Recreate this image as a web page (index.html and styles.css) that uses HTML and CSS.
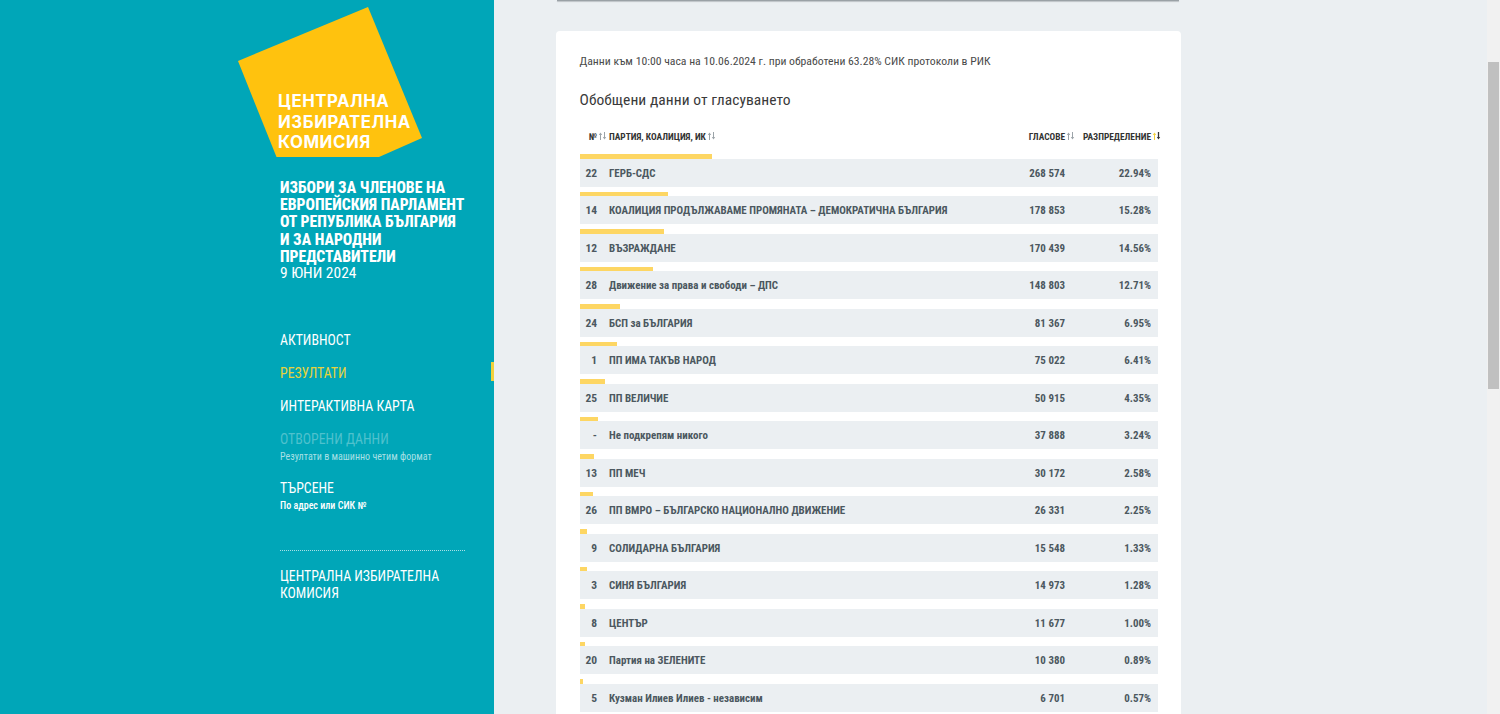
FILE: index.html
```html
<!DOCTYPE html>
<html lang="bg">
<head>
<meta charset="utf-8">
<title>Резултати</title>
<link rel="stylesheet" href="styles.css">
</head>
<body>
<div class="app">
  <aside class="sidebar">
    <div class="logo">
      <svg class="logo-shape" width="184" height="150" viewBox="0 0 184 150"><polygon points="130,0 0,54 38.500,150 141,150 184,131" fill="#ffc20e"/></svg>
      <div class="logo-text">ЦЕНТРАЛНА<br>ИЗБИРАТЕЛНА<br>КОМИСИЯ</div>
    </div>
    <h1 class="election"><b>ИЗБОРИ ЗА ЧЛЕНОВЕ НА ЕВРОПЕЙСКИЯ ПАРЛАМЕНТ ОТ РЕПУБЛИКА БЪЛГАРИЯ И ЗА НАРОДНИ ПРЕДСТАВИТЕЛИ</b>9 ЮНИ 2024</h1>
    <nav class="nav">
      <a class="nav-item">АКТИВНОСТ</a>
      <a class="nav-item active">РЕЗУЛТАТИ</a>
      <a class="nav-item">ИНТЕРАКТИВНА КАРТА</a>
      <a class="nav-item muted">ОТВОРЕНИ ДАННИ<small>Резултати в машинно четим формат</small></a>
      <a class="nav-item">ТЪРСЕНЕ<small class="strong">По адрес или СИК №</small></a>
    </nav>
    <a class="cik">ЦЕНТРАЛНА ИЗБИРАТЕЛНА КОМИСИЯ</a>
  </aside>
  <main class="main">
    <div class="topbar"></div>
    <section class="card">
      <p class="info">Данни към 10:00 часа на 10.06.2024 г. при обработени 63.28% СИК протоколи в РИК</p>
      <h2 class="title">Обобщени данни от гласуването</h2>
      <div class="thead">
        <div class="c-num">№<svg class="sort" viewBox="0 0 9 8"><path d="M2.500 8V2"/><path class="head" d="M.8 3 2.500 .5 4.200 3z"/><path d="M6.500 0v6"/><path class="head" d="M4.800 5 6.500 7.500 8.200 5z"/></svg></div>
        <div class="c-name">ПАРТИЯ, КОАЛИЦИЯ, ИК<svg class="sort" viewBox="0 0 9 8"><path d="M2.500 8V2"/><path class="head" d="M.8 3 2.500 .5 4.200 3z"/><path d="M6.500 0v6"/><path class="head" d="M4.800 5 6.500 7.500 8.200 5z"/></svg></div>
        <div class="c-votes">ГЛАСОВЕ<svg class="sort" viewBox="0 0 9 8"><path d="M2.500 8V2"/><path class="head" d="M.8 3 2.500 .5 4.200 3z"/><path d="M6.500 0v6"/><path class="head" d="M4.800 5 6.500 7.500 8.200 5z"/></svg></div>
        <div class="c-pct">РАЗПРЕДЕЛЕНИЕ<svg class="sort on" viewBox="0 0 9 8"><g class="up"><path d="M2.500 8V2"/><path class="head" d="M.8 3 2.500 .5 4.200 3z"/></g><g class="down"><path d="M6.500 0v6"/><path class="head" d="M4.800 5 6.500 7.500 8.200 5z"/></g></svg></div>
      </div>
      <div class="row"><i class="bar" style="width:22.94%"></i><div class="cells"><div class="c-num">22</div><div class="c-name">ГЕРБ-СДС</div><div class="c-votes">268 574</div><div class="c-pct">22.94%</div></div></div>
      <div class="row"><i class="bar" style="width:15.28%"></i><div class="cells"><div class="c-num">14</div><div class="c-name">КОАЛИЦИЯ ПРОДЪЛЖАВАМЕ ПРОМЯНАТА – ДЕМОКРАТИЧНА БЪЛГАРИЯ</div><div class="c-votes">178 853</div><div class="c-pct">15.28%</div></div></div>
      <div class="row"><i class="bar" style="width:14.56%"></i><div class="cells"><div class="c-num">12</div><div class="c-name">ВЪЗРАЖДАНЕ</div><div class="c-votes">170 439</div><div class="c-pct">14.56%</div></div></div>
      <div class="row"><i class="bar" style="width:12.71%"></i><div class="cells"><div class="c-num">28</div><div class="c-name">Движение за права и свободи – ДПС</div><div class="c-votes">148 803</div><div class="c-pct">12.71%</div></div></div>
      <div class="row"><i class="bar" style="width:6.95%"></i><div class="cells"><div class="c-num">24</div><div class="c-name">БСП за БЪЛГАРИЯ</div><div class="c-votes">81 367</div><div class="c-pct">6.95%</div></div></div>
      <div class="row"><i class="bar" style="width:6.41%"></i><div class="cells"><div class="c-num">1</div><div class="c-name">ПП ИМА ТАКЪВ НАРОД</div><div class="c-votes">75 022</div><div class="c-pct">6.41%</div></div></div>
      <div class="row"><i class="bar" style="width:4.35%"></i><div class="cells"><div class="c-num">25</div><div class="c-name">ПП ВЕЛИЧИЕ</div><div class="c-votes">50 915</div><div class="c-pct">4.35%</div></div></div>
      <div class="row"><i class="bar" style="width:3.24%"></i><div class="cells"><div class="c-num">-</div><div class="c-name">Не подкрепям никого</div><div class="c-votes">37 888</div><div class="c-pct">3.24%</div></div></div>
      <div class="row"><i class="bar" style="width:2.58%"></i><div class="cells"><div class="c-num">13</div><div class="c-name">ПП МЕЧ</div><div class="c-votes">30 172</div><div class="c-pct">2.58%</div></div></div>
      <div class="row"><i class="bar" style="width:2.25%"></i><div class="cells"><div class="c-num">26</div><div class="c-name">ПП ВМРО – БЪЛГАРСКО НАЦИОНАЛНО ДВИЖЕНИЕ</div><div class="c-votes">26 331</div><div class="c-pct">2.25%</div></div></div>
      <div class="row"><i class="bar" style="width:1.33%"></i><div class="cells"><div class="c-num">9</div><div class="c-name">СОЛИДАРНА БЪЛГАРИЯ</div><div class="c-votes">15 548</div><div class="c-pct">1.33%</div></div></div>
      <div class="row"><i class="bar" style="width:1.28%"></i><div class="cells"><div class="c-num">3</div><div class="c-name">СИНЯ БЪЛГАРИЯ</div><div class="c-votes">14 973</div><div class="c-pct">1.28%</div></div></div>
      <div class="row"><i class="bar" style="width:1%"></i><div class="cells"><div class="c-num">8</div><div class="c-name">ЦЕНТЪР</div><div class="c-votes">11 677</div><div class="c-pct">1.00%</div></div></div>
      <div class="row"><i class="bar" style="width:.89%"></i><div class="cells"><div class="c-num">20</div><div class="c-name">Партия на ЗЕЛЕНИТЕ</div><div class="c-votes">10 380</div><div class="c-pct">0.89%</div></div></div>
      <div class="row"><i class="bar" style="width:.57%"></i><div class="cells"><div class="c-num">5</div><div class="c-name">Кузман Илиев Илиев - независим</div><div class="c-votes">6 701</div><div class="c-pct">0.57%</div></div></div>
    </section>
  </main>
  <div class="scrollbar"><div class="thumb"></div></div>
</div>
</body>
</html>
```
FILE: styles.css
```css
* { box-sizing: border-box; }
html, body { margin: 0; height: 100%; overflow: hidden; }
body { font-family: Roboto, "Liberation Sans", sans-serif; font-stretch: 75%; background: #ebeff2; }
.app { display: flex; height: 714px; overflow: hidden; }

.sidebar { flex: 0 0 494px; background: #00a6b8; padding: 7px 29px 0 280px; color: #fff; position: relative; }
.logo { position: relative; width: 184px; height: 150px; margin-left: -42px; }
.logo-shape { display: block; }
.logo-text { position: absolute; left: 40px; top: 84px; font-family: Inter, "Noto Sans", sans-serif; font-stretch: normal; font-weight: 700; font-size: 16.800px; line-height: 20.500px; letter-spacing: .55px; white-space: nowrap; }
.election { margin: 22px 0 0; font-size: 15.500px; line-height: 17.200px; font-weight: 400; }
.election b { display: block; font-weight: 800; font-size: 15.700px; }
.nav { margin-top: 49px; display: flex; flex-direction: column; }
.nav-item { display: block; font-size: 13.800px; line-height: 18px; padding-bottom: 15px; color: #fff; }
.nav-item small { display: block; font-size: 10px; line-height: 12px; margin-top: 3px; font-weight: 400; color: #a8e0e6; }
.nav-item small.strong { color: #fff; font-weight: 500; }
.nav-item.active { color: #e8d23c; position: relative; }
.nav-item.active::after { content: ""; position: absolute; right: -29px; top: -2px; width: 3px; height: 19px; background: #f2d13c; }
.nav-item.muted { color: #4fc1cd; padding-bottom: 16px; }
.cik { display: block; margin-top: 23px; padding-top: 17px; border-top: 1px dotted #a8e0e6; font-size: 13.800px; line-height: 17px; }

.main { flex: 1; min-width: 0; padding: 0 0 0 62px; }
.topbar { width: 622px; height: 1px; margin-left: 1px; background: #9aa1a6; box-shadow: 0 1px 1px #b8bdc1; }
.card { width: 625px; min-height: 700px; margin-top: 30px; padding: 22px 23px 0 23.500px; background: #fff; border-radius: 4px 4px 0 0; }
.info { margin: 0; font-size: 11.720px; line-height: 16px; color: #4a4a4a; }
.title { margin: 20px 0 0; font-size: 15.500px; line-height: 22px; font-weight: 400; color: #3a3a3a; letter-spacing: .06px; }
.thead { display: flex; align-items: center; height: 20px; margin: 15px -3px 0 0; font-size: 9.400px; font-weight: 700; color: #333; }
.sort { width: 9px; height: 8px; margin-left: 1px; vertical-align: 0; fill: none; stroke: #9ba3a8; stroke-width: 1; }
.sort .head { fill: #9ba3a8; stroke: none; }
.sort.on .up path { stroke: #f2d13c; }
.sort.on .up .head { fill: #f2d13c; stroke: none; }
.sort.on .down path { stroke: #333; stroke-width: 1.300; }
.sort.on .down .head { fill: #333; stroke: none; }

.row { width: 578px; height: 37.500px; padding-top: 4px; }
.bar { display: block; height: 4.500px; background: #fdd663; }
.cells { display: flex; align-items: baseline; height: 28px; padding-top: 7px; line-height: 14px; background: #ebeff2; font-size: 10.950px; font-weight: 700; color: #4c5860; }
.thead + .row { margin-top: 4px; }
.c-num { flex: 0 0 29.500px; text-align: right; padding-right: 12px; }
.cells .c-num { font-size: 11.500px; }
.thead .c-num { padding-right: 2px; white-space: nowrap; }
.c-name { flex: 1; min-width: 0; }
.c-votes { flex: 0 0 80px; text-align: right; }
.c-pct { flex: 0 0 92.500px; text-align: right; padding-right: 6.500px; }
.thead .c-votes { flex-basis: 60px; white-space: nowrap; }
.thead .c-pct { flex-basis: 86px; padding-right: 0; white-space: nowrap; }

.scrollbar { flex: 0 0 13px; background: #f1f1f1; padding: 62px 1px 0 1px; }
.thumb { height: 327px; background: #c0c0c0; }
```
